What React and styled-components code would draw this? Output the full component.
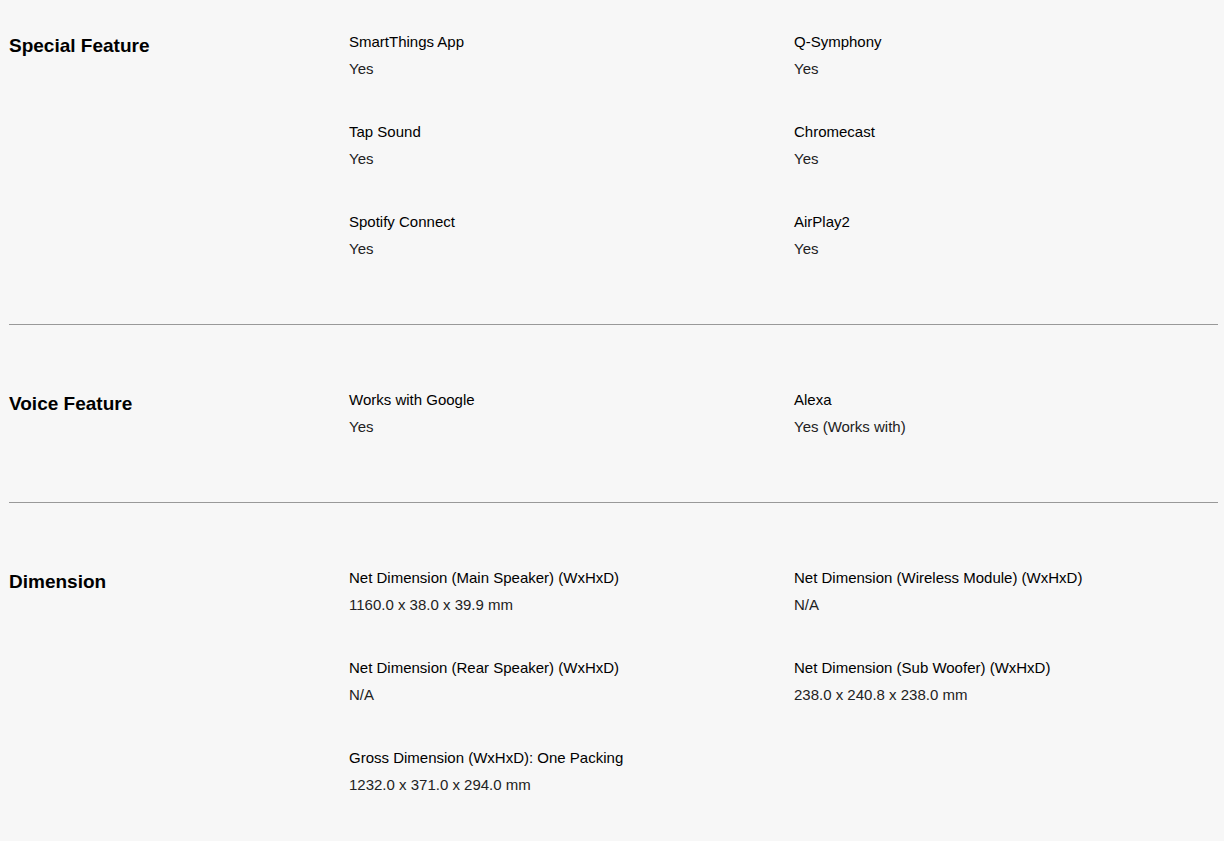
import React from 'react'
import styled, { createGlobalStyle } from 'styled-components'

const GlobalStyle = createGlobalStyle`
  html, body {
    margin: 0;
    padding: 0;
    background: #f7f7f7;
    font-family: "Liberation Sans", Arial, sans-serif;
  }
`;

const Page = styled.div`
  padding: 0 6px 0 9px;
  background: #f7f7f7;
  min-height: 841px;
`;

const Section = styled.section`
  display: grid;
  grid-template-columns: 340px 445px 1fr;
  padding: ${p => (p.first ? '32px' : '65px')} 0 65px;
  border-bottom: ${p => (p.last ? 'none' : '1px solid #999')};
`;

const Title = styled.h3`
  margin: 0;
  padding-top: 2px;
  font-size: 19px;
  line-height: 24px;
  font-weight: 700;
  color: #000;
`;

const Column = styled.div`
  display: flex;
  flex-direction: column;
  gap: 43px;
`;

const Item = styled.div`
  display: flex;
  flex-direction: column;
  gap: 7px;
`;

const Label = styled.div`
  font-size: 15px;
  line-height: 20px;
  color: #000;
`;

const Value = styled.div`
  font-size: 15px;
  line-height: 20px;
  color: #222;
`;

const sections = [
  {
    title: 'Special Feature',
    left: [
      ['SmartThings App', 'Yes'],
      ['Tap Sound', 'Yes'],
      ['Spotify Connect', 'Yes'],
    ],
    right: [
      ['Q-Symphony', 'Yes'],
      ['Chromecast', 'Yes'],
      ['AirPlay2', 'Yes'],
    ],
  },
  {
    title: 'Voice Feature',
    left: [['Works with Google', 'Yes']],
    right: [['Alexa', 'Yes (Works with)']],
  },
  {
    title: 'Dimension',
    left: [
      ['Net Dimension (Main Speaker) (WxHxD)', '1160.0 x 38.0 x 39.9 mm'],
      ['Net Dimension (Rear Speaker) (WxHxD)', 'N/A'],
      ['Gross Dimension (WxHxD): One Packing', '1232.0 x 371.0 x 294.0 mm'],
    ],
    right: [
      ['Net Dimension (Wireless Module) (WxHxD)', 'N/A'],
      ['Net Dimension (Sub Woofer) (WxHxD)', '238.0 x 240.8 x 238.0 mm'],
    ],
  },
];

const Specs = ({ items }) => (
  <Column>
    {items.map(([label, value]) => (
      <Item key={label}>
        <Label>{label}</Label>
        <Value>{value}</Value>
      </Item>
    ))}
  </Column>
);

const App = () => {
  return (
    <Page>
      <GlobalStyle />
      {sections.map((s, i) => (
        <Section key={s.title} first={i === 0} last={i === sections.length - 1}>
          <Title>{s.title}</Title>
          <Specs items={s.left} />
          <Specs items={s.right} />
        </Section>
      ))}
    </Page>
  )
}

export default App
